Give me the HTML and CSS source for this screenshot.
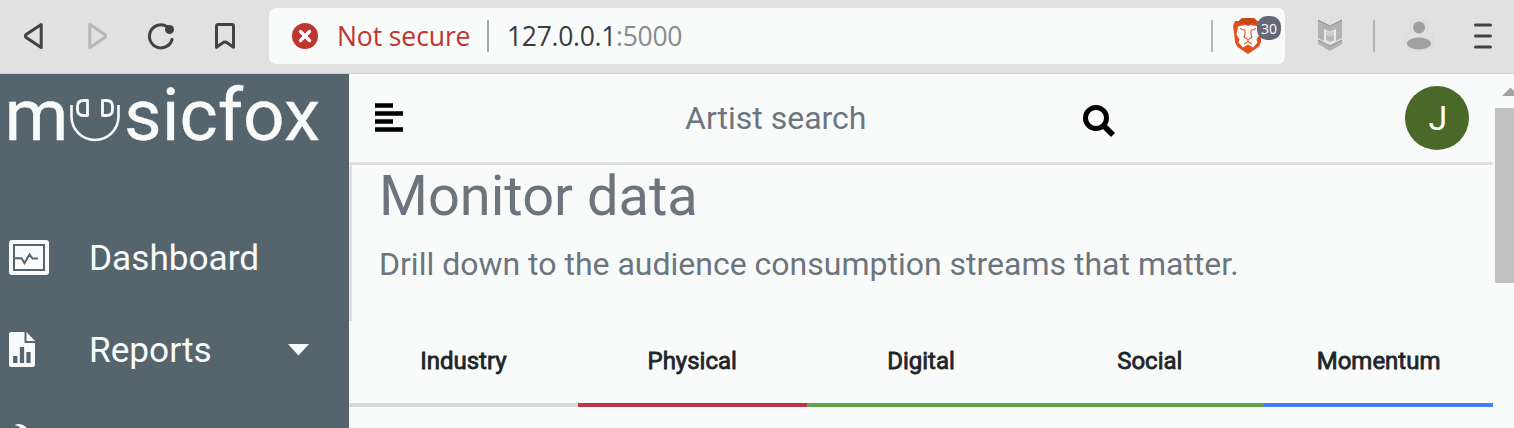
FILE: index.html
```html
<!DOCTYPE html>
<html lang="en">
<head>
<meta charset="utf-8">
<title>musicfox</title>
<link rel="stylesheet" href="styles.css">
</head>
<body>
<div class="toolbar">
  <nav class="nav-buttons">
    <svg width="20" height="28" viewBox="0 0 20 28" class="stroke"><path d="M17.2 2.500v23L2.500 15.800Q.200 14 2.500 12.200z"/></svg>
    <svg width="20" height="28" viewBox="0 0 20 28" class="stroke muted"><path d="M2.800 2.500v23L17.500 15.800Q19.800 14 17.500 12.200z"/></svg>
    <svg width="28" height="28" viewBox="0 0 28 28" class="stroke"><path d="M20 4.600A11.500 11.500 0 1 0 25 17.500"/><circle cx="22.500" cy="7.500" r="4.500" class="dot"/></svg>
    <svg width="22" height="28" viewBox="0 0 22 28" class="stroke"><path d="M2.500 25.300V4q0-1.500 1.500-1.500h14q1.500 0 1.500 1.500v21.300l-6-4.300q-2.500-2-5 0z"/></svg>
  </nav>
  <div class="address">
    <svg width="26" height="26" viewBox="0 0 26 26"><circle cx="13" cy="13" r="13" fill="#bd362f"/><path d="M8.500 8.500l9 9m0-9l-9 9" stroke="#fff" stroke-width="3.300" stroke-linecap="round"/></svg>
    <span class="not-secure">Not secure</span>
    <i class="rule"></i>
    <span class="url">127.0.0.1<span class="port">:5000</span></span>
    <i class="rule rule-right"></i>
    <div class="shield">
      <svg width="30" height="36" viewBox="0 0 30 36"><path d="M9 0h12l3 3h3l2 5-1 7v9q-1 4-4 6l-9 6-9-6q-3-2-4-6L1 15 0 8l2-5h4z" fill="#e2511d"/><path d="M9 0h12l4 4-4 2H9L5 4z" fill="#c5481b"/><path d="M5 8.500l7-1.500 3 1 3-1 7 1.500 1.500 8-3 5 1 3-4.500 5-5-3-5 3-4.500-5 1-3-3-5z" fill="#fff"/><path d="M7 10.500l5 2v4l-1 3 4 2 4-2-1-3v-4l5-2M15 22v1.500l-4 2.500M15 23.500l4 2.500" fill="none" stroke="#e2511d" stroke-width="1.100"/></svg>
      <span class="badge">30</span>
    </div>
  </div>
  <div class="extensions">
    <svg width="24" height="34" viewBox="0 0 24 34"><path d="M0 1l12 6 12-6v18l-6 3V10l-6 3-6-3v12l-6-3z" fill="#b0b2b3"/><path d="M6 10l6 3 6-3v11l-6 3-6-3z" fill="#e9e9e9"/><path d="M8 12l4 2 4-2v9l-4 2-4-2z" fill="#b8b9b9"/><path d="M8 12l4 2 4-2v4l-4 2-4-2z" fill="#e9e9e9" opacity=".4"/><path d="M0 21l12 6 12-6v4l-12 7-12-7z" fill="#b4b4b4"/><path d="M0 1l12 6 12-6M0 21l12 6 12-6" stroke="#999" fill="none" stroke-width="1.200"/></svg>
    <i class="rule"></i>
    <svg class="person" width="32" height="36" viewBox="0 0 32 36"><path d="M16 1c8 0 10 6 8 13 11 5 8 19-8 19S-3 19 8 14C6 7 8 1 16 1z" fill="#e0e0e0" stroke="#dadada"/><circle cx="16" cy="9.500" r="6" fill="#a0a0a0"/><ellipse cx="16" cy="25.500" rx="12" ry="6" fill="#a0a0a0"/></svg>
    <svg class="menu" width="18" height="26" viewBox="0 0 18 26"><path d="M1.500 2h15M1.500 13h15M1.500 24h15" stroke="#424242" stroke-width="3" stroke-linecap="round"/></svg>
  </div>
</div>
<div class="app">
  <aside class="sidebar">
    <div class="logo"><span class="logo-m">m</span><svg width="50" height="46" viewBox="0 0 50 46"><path d="M1.500 8V19.500A23.500 23.500 0 0 0 48.500 19.500V8" fill="none" stroke="#f9fbfa" stroke-width="2.600"/><path d="M17.500 3.500v15h-4q-6 0-6-6v-3q0-6 6-6zM32.500 3.500h4q6 0 6 6v3q0 6-6 6h-4z" fill="none" stroke="#f9fbfa" stroke-width="2.800" stroke-linejoin="round"/></svg><span class="logo-rest">sicfox</span></div>
    <div class="side-item">
      <span class="side-icon"><svg width="40" height="35" viewBox="0 0 40 35"><rect width="40" height="35" rx="3" fill="#f9fbfa"/><path d="M5 5h30v25H5zM5 18.300h7.500l3 4.700 5-8.500 3 4h5.500" fill="none" stroke="#56646d" stroke-width="2"/></svg></span>
      <span class="label">Dashboard</span>
    </div>
    <div class="side-item">
      <span class="side-icon"><svg width="26" height="35" viewBox="0 0 26 35"><path d="M2 0h13.500v11H26v22q0 2-2 2H2q-2 0-2-2V2q0-2 2-2zM17.500 0l8.500 9h-8.500z" fill="#f9fbfa"/><path d="M6.300 24v7M13 15v16M19.500 20v11" stroke="#56646d" stroke-width="4.300"/></svg></span>
      <span class="label reports">Reports</span>
      <svg class="caret" width="22" height="12" viewBox="0 0 22 12"><path d="M0 0h21L10.500 11.500z" fill="#f9fbfa"/></svg>
    </div>
    <div class="side-item next"><svg width="28" height="6" viewBox="0 0 28 6"><path d="M6.500 2.500q6-2 10.500 2.500v1h-6q-1-2.500-4.500-2.500z" fill="#f9fbfa"/></svg></div>
  </aside>
  <main class="main">
    <header class="header">
      <svg width="28" height="30" viewBox="0 0 28 30"><path d="M0 2.500h18M0 10.500h28M0 18.500h18M0 26.500h28" stroke="#000" stroke-width="4.400"/></svg>
      <span class="search">Artist search</span>
      <svg class="magnifier" width="33" height="33" viewBox="0 0 33 33"><circle cx="13" cy="13" r="10.500" fill="none" stroke="#000" stroke-width="5"/><path d="M21 21l9 9" stroke="#000" stroke-width="5.600"/></svg>
      <span class="avatar">J</span>
    </header>
    <section class="intro">
      <h1>Monitor data</h1>
      <p>Drill down to the audience consumption streams that matter.</p>
    </section>
    <div class="tabs">
      <span class="tab grey">Industry</span><span class="tab red">Physical</span><span class="tab green">Digital</span><span class="tab green">Social</span><span class="tab blue">Momentum</span>
    </div>
  </main>
  <div class="scrollbar">
    <svg width="19" height="34" viewBox="0 0 19 34"><path d="M7 22l8.500-8.500L24 22z" fill="#a3a3a3"/></svg>
    <div class="thumb"></div>
  </div>
</div>
</body>
</html>
```
FILE: styles.css
```css
* { box-sizing: border-box; }
body { margin: 0; width: 1514px; height: 428px; overflow: hidden; background: #f9fbfa; font-family: Roboto, sans-serif; }
svg { display: block; flex: none; }
span { white-space: nowrap; }
.toolbar { height: 74px; background: #e1e1e1; border-bottom: 1px solid #d2d2d2; display: flex; align-items: flex-start; }
.nav-buttons { width: 269px; flex: none; display: flex; padding: 22px 0 0 24px; }
.nav-buttons svg:nth-child(2) { margin-left: 43px; }
.nav-buttons svg:nth-child(3) { margin-left: 40px; }
.nav-buttons svg:nth-child(4) { margin-left: 39px; }
.stroke { fill: none; stroke: #424242; stroke-width: 3; stroke-linejoin: round; stroke-linecap: round; }
.muted { stroke: #b4b6b7; }
.dot { fill: #424242; stroke: none; }
.address { width: 1016px; height: 56px; flex: none; margin-top: 8px; padding-left: 23px; background: #f9fbfa; border-radius: 7px; display: flex; align-items: center; font: 400 26.500px/56px "Open Sans", sans-serif; }
.not-secure { width: 150px; margin-left: 19px; color: #bd362f; letter-spacing: -.1px; }
.rule { width: 2px; height: 32px; background: #a5a6a6; flex: none; }
.url { margin-left: 18px; width: 176px; color: #3a3d40; letter-spacing: -.3px; }
.port { color: #868b8f; }
.rule-right { margin-left: 528px; background: #b9b9b9; }
.shield { position: relative; margin-left: 20px; }
.badge { position: absolute; left: 24px; top: -2px; width: 24px; height: 24px; border-radius: 10px; background: #636876; color: #fff; font: 14px/25px "Open Sans", sans-serif; text-align: center; }
.extensions { display: flex; align-items: center; height: 72px; padding-left: 33px; }
.extensions .rule { margin-left: 31px; background: #b5b5b5; }
.person { margin-left: 28px; }
.menu { margin-left: 39px; }
.app { display: flex; height: 354px; }
.sidebar { width: 349px; flex: none; background: #56646d; color: #f9fbfa; }
.logo { height: 138px; padding-left: 4.500px; display: flex; align-items: flex-start; font-size: 73px; line-height: 83px; -webkit-text-stroke: .3px #f9fbfa; }
.logo-m { width: 65px; }
.logo svg { margin-top: 23px; }
.logo-rest { margin-left: 4.500px; }
.side-item { height: 92px; padding-left: 9px; display: flex; align-items: center; font-size: 35.200px; }
.side-icon { width: 80px; flex: none; margin-top: -1px; }
.reports { width: 199px; }
.next { height: 32px; align-items: flex-end; }
.main { width: 1144px; flex: none; }
.header { height: 91px; border-bottom: 3px solid #e0e0e0; padding-left: 26px; display: flex; align-items: center; }
.search { width: 398px; margin-left: 282px; font-size: 32px; color: #6c757d; }
.magnifier { margin-top: 6px; }
.avatar { width: 64px; height: 64px; margin-left: 289px; border-radius: 50%; background: #4a6928; color: #fff; font-size: 34px; line-height: 65px; padding-left: 2px; text-align: center; }
.intro { height: 156px; border-left: 3px solid #e0e0e0; border-top-left-radius: 4px; padding-left: 27px; color: #6c757d; }
h1 { margin: 0; font-size: 56px; font-weight: 400; line-height: 62px; white-space: nowrap; }
.intro p { margin: 18px 0 0; font-size: 32px; line-height: 38px; white-space: nowrap; }
.tabs { display: grid; grid-template-columns: repeat(5, 1fr); }
.tab { height: 86px; border-bottom: 4px solid; text-align: center; font-size: 24px; line-height: 80px; -webkit-text-fill-color: #212529; -webkit-text-stroke: .8px #212529; }
.grey { border-color: #d6d8d9; }
.red { border-color: #bd3545; }
.green { border-color: #61a44c; }
.blue { border-color: #427dfa; }
.scrollbar { width: 19px; margin-left: 2px; }
.thumb { height: 175px; background: #c1c1c1; }
```
